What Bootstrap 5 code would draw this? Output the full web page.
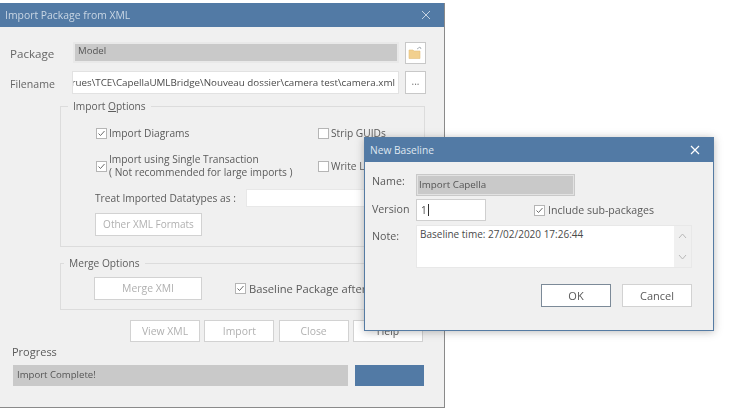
<!DOCTYPE html>
<html lang="en">
<head>
<meta charset="utf-8">
<title>Import Package from XML</title>
<link href="https://cdn.jsdelivr.net/npm/bootstrap@5.3.0/dist/css/bootstrap.min.css" rel="stylesheet">
<style>
html,body{margin:0;background:#fff;height:408px;overflow:hidden}
body{font-family:"Open Sans","Noto Sans",sans-serif;font-size:10.3px;color:#5a5a5a;line-height:13px}
.win{position:absolute;background:#f0f0f0;display:flex;flex-direction:column;filter:blur(.3px)}
.win-main{left:0;top:3px;width:445px;height:405px;border-right:1px solid #8a8a8a;border-bottom:1px solid #8a8a8a}
.win-sub{left:364px;top:137px;width:350px;height:194px;border:1px solid #557ba3;box-shadow:0 1px 8px rgba(60,60,60,.35)}
.tbar{background:#527aa5;color:#c9d6e4;font-size:10.4px;height:24px;flex:none;padding:0 5px}
.win-sub .tbar{color:#dfe7f0;padding:0 5px;height:24px;font-size:10.2px}
.tx{width:10px;height:10px;stroke:#c4d2e2;stroke-width:1;fill:none}
.win-sub .tx{stroke:#fff;stroke-width:1.2}
.lbl{font-size:11.6px;color:#666}
.lbl-file{font-size:10.6px;padding-top:3px}
.lbl-pkg{padding-top:2px}
.grey-field{background:#c9c9c9;outline:2px solid #e9e9e9;outline-offset:-2px;padding:2px 5px;color:#555;font-size:9.6px}
.white-field{background:#fff;border:1px solid #e2e2e2;font-size:10px;color:#4a4a4a}
.pkg-row{height:21px;margin:15px 18px 0 10px}
.file-row{height:23px;margin:8px 18px 0 10px}
.lab-col{width:62px;flex:none}
.f-pkg{width:327px;margin-left:1px;height:21px}
.f-file{width:329px;height:23px;overflow:hidden;white-space:nowrap;direction:rtl;text-align:left;padding:4px 3px 0 3px;font-size:9.8px}
.sq-btn{width:21px;height:23px;border:1px solid #c8c8c8;background:#fff;margin-left:6px;flex:none;color:#777;font-size:10px;line-height:18px;text-align:center;padding:0}
.pkg-row .sq-btn{height:22px}
.grp{border:1px solid #dcdcdc;margin-left:60px;width:365px;position:relative}
.grp-title{position:absolute;top:-7px;background:#f0f0f0;padding:0 5px;font-size:10.2px;line-height:13px;color:#5e5e5e}
.grp-import{height:141px;margin-top:12px;padding:19px 0 0 35px}
.grp-merge{height:47px;margin-top:16px;padding:13px 0 0 33px}
.ck{width:11px;height:11px;border:1px solid #b5b5b5;background:#fff;flex:none;display:inline-block;position:relative}
.ck svg{display:block;width:9px;height:9px;stroke:#6a6a6a;fill:none;stroke-width:1}
.ck-line{display:flex;align-items:center;gap:2px;font-size:10.2px;color:#5a5a5a}
.wbtn{background:#fff;border:1px solid #d2d2d2;color:#b0b0b0;font-size:10.4px;line-height:13px;padding:0;height:23px;border-radius:0;flex:none}
.btn-w{width:108px}
.row-a{height:13px;margin-top:1px}
.col-left{width:222px;flex:none}
.row-b{height:26px;margin-top:13px}
.row-c{height:18px;margin:10px 0 0 -1px;font-size:10.2px}
.treat-input{width:150px;height:18px;background:#fff;border:1px solid #e8e8e8;margin-left:10px}
.row-d{margin:6px 0 0 -1px}
.row-d .wbtn{font-size:10px;width:107px}
.base-line{font-size:11.2px;margin-left:33px;gap:3px}
.btn-row{margin:10px 0 0 130px;gap:4.3px}
.btn-row .wbtn{width:70px;height:22px}
.btn-row .wbtn.help{color:#5a5a5a}
.prog-lab{margin:3px 0 0 12px;font-size:11px;height:13px}
.prog-row{margin:7px 0 0 13px;gap:7px;height:21px}
.prog-text{width:335px;background:#c9c9c9;padding:3px 4px;font-size:9.6px;color:#555}
.prog-bar{width:69px;background:#527aa5}
.sub-body{padding:12px 21px 0 7px}
.nm-col{width:44px;flex:none;font-size:10.7px;color:#5a5a5a}
.nm-top{padding-top:1px}
.nm-note{padding-top:5px}
.sub-name{width:159px;height:22px;padding:4px 3px;outline-color:#e2e2e2;outline-width:1px;font-size:9.8px}
.sub-ver{width:70px;height:22px;border:1px solid #cfcfcf;padding:4px 4px;display:flex;align-items:center}
.ver-row{margin-top:3px}
.ver-lab{position:relative;top:-1px}
.note-row{margin-top:4px}
.incl{margin-left:48px;font-size:10.6px;gap:3px}
.sub-note{width:277px;height:43px;padding:2px 3px;position:relative;display:flex;justify-content:space-between;border:1px solid #e8e8e8}
.caret{display:inline-block;width:1px;height:12px;background:#333;margin-left:1px}
.sbar{width:17px;margin:-2px -3px;background:#f0f0f0;display:flex;flex-direction:column;justify-content:space-between;align-items:center;padding:7px 0}
.sbar svg{width:9px;height:6px;stroke:#b9b9b9;fill:none;stroke-width:1}
.sub-btns{margin:16px 0 0 169px;gap:11px}
.sub-btns .wbtn{width:70px;color:#5a5a5a;font-size:11px;height:23px}
.sub-btns .wbtn.prim{border-color:#7c8a98}
</style>
</head>
<body>
<div class="win win-main">
  <div class="tbar d-flex align-items-center justify-content-between"><span>Import Package from XML</span>
    <svg class="tx me-2" viewBox="0 0 10 10"><path d="M1 1l8 8M9 1l-8 8"/></svg></div>

  <div class="pkg-row d-flex align-items-center">
    <div class="lab-col lbl lbl-pkg">Package</div>
    <div class="grey-field f-pkg">Model</div>
    <div class="sq-btn d-flex align-items-center justify-content-center">
      <svg width="15" height="14" viewBox="0 0 15 14"><path d="M1 4h4l1 1h6v7.500H1z" fill="#f2d08f" stroke="#e3bf7d" stroke-width=".6"/><path d="M9 3l3-2 1 2" fill="none" stroke="#aeb4ba"/></svg>
    </div>
  </div>
  <div class="file-row d-flex align-items-center">
    <div class="lab-col lbl lbl-file">Filename</div>
    <div class="white-field f-file"><bdi>rues\TCE\CapellaUMLBridge\Nouveau dossier\camera test\camera.xml</bdi></div>
    <div class="sq-btn">...</div>
  </div>

  <div class="grp grp-import">
    <div class="grp-title" style="left:7px">Import <u>O</u>ptions</div>
    <div class="d-flex row-a">
      <div class="col-left ck-line"><span class="ck"><svg viewBox="0 0 9 9"><path d="M1.500 4.500l2 2 4-4.500"/></svg></span>Import Diagrams</div>
      <div class="ck-line"><span class="ck"></span>Strip GUIDs</div>
    </div>
    <div class="d-flex row-b">
      <div class="col-left ck-line"><span class="ck"><svg viewBox="0 0 9 9"><path d="M1.500 4.500l2 2 4-4.500"/></svg></span><span>Import using Single Transaction<br>( Not recommended for large imports )</span></div>
      <div class="ck-line"><span class="ck"></span>Write Log</div>
    </div>
    <div class="d-flex align-items-center row-c">
      <span>Treat Imported Datatypes as :</span><span class="treat-input"></span>
    </div>
    <div class="row-d"><button class="wbtn btn-w" type="button">Other XML Formats</button></div>
  </div>

  <div class="grp grp-merge">
    <div class="grp-title" style="left:3px">Merge Options</div>
    <div class="d-flex align-items-center">
      <button class="wbtn btn-w" type="button">Merge XMI</button>
      <div class="ck-line base-line"><span class="ck"><svg viewBox="0 0 9 9"><path d="M1.500 4.500l2 2 4-4.500"/></svg></span>Baseline Package after Import</div>
    </div>
  </div>

  <div class="d-flex btn-row">
    <button class="wbtn" type="button">View XML</button>
    <button class="wbtn" type="button">Import</button>
    <button class="wbtn" type="button">Close</button>
    <button class="wbtn help" type="button">Help</button>
  </div>
  <div class="prog-lab">Progress</div>
  <div class="d-flex prog-row">
    <div class="prog-text">Import Complete!</div>
    <div class="prog-bar"></div>
  </div>
</div>

<div class="win win-sub">
  <div class="tbar d-flex align-items-center justify-content-between"><span>New Baseline</span>
    <svg class="tx me-2" viewBox="0 0 10 10"><path d="M1 1l8 8M9 1l-8 8"/></svg></div>
  <div class="sub-body">
    <div class="d-flex"><div class="nm-col nm-top">Name:</div><div class="grey-field sub-name">Import Capella</div></div>
    <div class="d-flex align-items-center ver-row">
      <div class="nm-col"><span class="ver-lab">Version</span></div>
      <div class="white-field sub-ver">1<span class="caret"></span></div>
      <div class="ck-line incl"><span class="ck"><svg viewBox="0 0 9 9"><path d="M1.500 4.500l2 2 4-4.500"/></svg></span>Include sub-packages</div>
    </div>
    <div class="d-flex note-row">
      <div class="nm-col nm-note">Note:</div>
      <div class="white-field sub-note"><span>Baseline time: 27/02/2020 17:26:44</span>
        <div class="sbar"><svg viewBox="0 0 9 6"><path d="M1 5l3.500-4L8 5"/></svg><svg viewBox="0 0 9 6"><path d="M1 1l3.500 4L8 1"/></svg></div>
      </div>
    </div>
    <div class="d-flex sub-btns">
      <button class="wbtn prim" type="button">OK</button>
      <button class="wbtn" type="button">Cancel</button>
    </div>
  </div>
</div>
</body>
</html>
